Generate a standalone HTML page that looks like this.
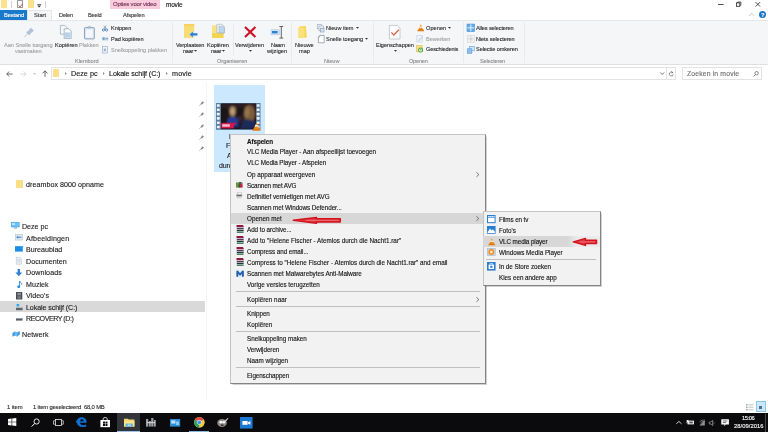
<!DOCTYPE html>
<html><head><meta charset="utf-8"><title>movie</title>
<style>
html,body{margin:0;padding:0;}
body{width:768px;height:432px;overflow:hidden;background:#fff;position:relative;font-family:'Liberation Sans', sans-serif;font-size:6.6px;color:#1a1a1a;}
.a{position:absolute;}
.t{position:absolute;white-space:nowrap;line-height:40px;transform:scale(.25);transform-origin:0 0;-webkit-text-stroke:0.45px;}
svg{position:absolute;overflow:visible;}
</style></head><body>
<div class="a" style="left:109.8px;top:0px;width:50px;height:9.3px;background:#f9cbdc;"></div>
<div class="t" style="left:113.00px;top:-0.70px;font-size:24.0px;color:#6e2f54;letter-spacing:-0.80px;">Opties voor video</div>
<div class="t" style="left:166.00px;top:0.30px;font-size:26.0px;color:#111;letter-spacing:-0.83px;">movie</div>
<div class="a" style="left:1px;top:0px;width:6.2px;height:8px;background:#f9e18e;border-radius:0.5px"></div>
<div class="a" style="left:11px;top:1px;width:0.6px;height:7px;background:#d0d0d0;"></div>
<div class="a" style="left:16.5px;top:0px;width:6px;height:8px;background:#fdfdfd;border:0.6px solid #9a9a9a;box-sizing:border-box;border-radius:0.5px"></div>
<svg style="left:17.5px;top:2.5px" width="5" height="5" viewBox="0 0 5 5"><path d="M0.5 2.5 L2 4 L4.5 0.8" stroke="#c0504d" stroke-width="0.9" fill="none"/></svg>
<div class="a" style="left:28px;top:0px;width:5.6px;height:8px;background:#f9e18e;border-radius:0.5px"></div>
<svg style="left:37px;top:3.5px" width="4.5" height="4" viewBox="0 0 4.5 4"><rect x="0.3" y="0" width="3.8" height="0.7" fill="#333"/><path d="M0.3 1.5 H4.1 L2.2 3.5 Z" fill="#333"/></svg>
<div class="a" style="left:45px;top:1px;width:0.6px;height:7px;background:#d0d0d0;"></div>
<svg style="left:718px;top:0px" width="50" height="10" viewBox="0 0 50 10"><path d="M0 4.5 H5.6" stroke="#222" stroke-width="0.8"/><rect x="18.4" y="2.9" width="3.4" height="3.4" fill="none" stroke="#222" stroke-width="0.8"/><path d="M19.6 2.9 V2 H22.9 V5.3 H21.8" fill="none" stroke="#222" stroke-width="0.7"/><path d="M37.6 2.1 L42.1 6.6 M42.1 2.1 L37.6 6.6" stroke="#222" stroke-width="0.8"/></svg>
<div class="a" style="left:0px;top:10px;width:27px;height:10px;background:#1979ca;"></div>
<div class="t" style="left:3.50px;top:10.30px;font-size:22.8px;color:#fff;letter-spacing:-0.50px;">Bestand</div>
<div class="a" style="left:27px;top:10px;width:25px;height:11px;background:#f5f6f7;border:0.6px solid #e6e7e8;border-bottom:none;box-sizing:border-box"></div>
<div class="t" style="left:33.50px;top:10.30px;font-size:22.8px;color:#333;letter-spacing:-0.01px;">Start</div>
<div class="t" style="left:59.00px;top:10.30px;font-size:22.8px;color:#333;letter-spacing:-0.70px;">Delen</div>
<div class="t" style="left:87.50px;top:10.30px;font-size:22.8px;color:#333;letter-spacing:-0.84px;">Beeld</div>
<div class="t" style="left:123.30px;top:10.20px;font-size:22.8px;color:#333;letter-spacing:-0.32px;">Afspelen</div>
<svg style="left:748px;top:12px" width="8" height="5" viewBox="0 0 8 5"><path d="M1 4 L3.7 1.3 L6.4 4" stroke="#bdbdbd" stroke-width="0.8" fill="none"/></svg>
<div class="a" style="left:759.3px;top:11.2px;width:7.2px;height:7.2px;background:#1a74c7;border-radius:50%"></div>
<div class="t" style="left:761.30px;top:9.90px;font-size:23.2px;color:#fff;letter-spacing:-0.99px;font-weight:700;">?</div>
<div class="a" style="left:0px;top:20px;width:768px;height:45px;background:#f5f6f7;border-top:0.6px solid #e6e7e8;border-bottom:0.7px solid #dfe0e1;box-sizing:border-box"></div>
<div class="a" style="left:52px;top:20px;width:0px;height:0px;background:#f5f6f7;"></div>
<div class="a" style="left:172px;top:22px;width:0.7px;height:41px;background:#e9eaeb;"></div>
<div class="a" style="left:291.3px;top:22px;width:0.7px;height:41px;background:#e9eaeb;"></div>
<div class="a" style="left:372.5px;top:22px;width:0.7px;height:41px;background:#e9eaeb;"></div>
<div class="a" style="left:463.3px;top:22px;width:0.7px;height:41px;background:#e9eaeb;"></div>
<div class="a" style="left:523.5px;top:22px;width:0.7px;height:41px;background:#e9eaeb;"></div>
<div class="a" style="left:232.8px;top:24px;width:0.6px;height:32px;background:#eaebec;"></div>
<div class="t" style="left:4.00px;top:39.80px;font-size:22.4px;color:#a3a3a3;letter-spacing:-0.08px;">Aan Snelle toegang</div>
<div class="t" style="left:15.00px;top:46.00px;font-size:22.4px;color:#a3a3a3;letter-spacing:-0.25px;">vastmaken</div>
<div class="t" style="left:55.00px;top:39.80px;font-size:22.4px;color:#2a2a2a;letter-spacing:0.05px;">Kopiëren</div>
<div class="t" style="left:79.00px;top:39.80px;font-size:22.4px;color:#a3a3a3;letter-spacing:-0.23px;">Plakken</div>
<div class="t" style="left:111.00px;top:23.20px;font-size:22.4px;color:#2a2a2a;letter-spacing:-0.19px;">Knippen</div>
<div class="t" style="left:111.00px;top:34.00px;font-size:22.4px;color:#2a2a2a;letter-spacing:-0.16px;">Pad kopiëren</div>
<div class="t" style="left:111.00px;top:44.50px;font-size:22.4px;color:#a3a3a3;letter-spacing:0.00px;">Snelkoppeling plakken</div>
<div class="t" style="left:74.50px;top:55.50px;font-size:22.4px;color:#8c8c8c;letter-spacing:-0.23px;">Klembord</div>
<div class="t" style="left:175.80px;top:39.70px;font-size:22.4px;color:#2a2a2a;letter-spacing:-0.49px;">Verplaatsen</div>
<div class="t" style="left:182.50px;top:46.00px;font-size:22.4px;color:#2a2a2a;letter-spacing:-1.20px;">naar</div>
<div class="t" style="left:207.00px;top:39.70px;font-size:22.4px;color:#2a2a2a;letter-spacing:-0.35px;">Kopiëren</div>
<div class="t" style="left:210.50px;top:46.00px;font-size:22.4px;color:#2a2a2a;letter-spacing:-1.20px;">naar</div>
<div class="t" style="left:235.00px;top:39.70px;font-size:22.4px;color:#2a2a2a;letter-spacing:-0.09px;">Verwijderen</div>
<div class="t" style="left:270.70px;top:39.60px;font-size:22.4px;color:#2a2a2a;letter-spacing:-1.42px;">Naam</div>
<div class="t" style="left:267.00px;top:46.00px;font-size:22.4px;color:#2a2a2a;letter-spacing:0.05px;">wijzigen</div>
<div class="t" style="left:216.70px;top:55.50px;font-size:22.4px;color:#8c8c8c;letter-spacing:-0.18px;">Organiseren</div>
<svg style="left:194.2px;top:49.8px" width="3" height="2" viewBox="0 0 3 2"><path d="M0 0 H3 L1.5 1.7 Z" fill="#333"/></svg>
<svg style="left:222.2px;top:49.8px" width="3" height="2" viewBox="0 0 3 2"><path d="M0 0 H3 L1.5 1.7 Z" fill="#333"/></svg>
<svg style="left:248.5px;top:49.8px" width="3" height="2" viewBox="0 0 3 2"><path d="M0 0 H3 L1.5 1.7 Z" fill="#333"/></svg>
<svg style="left:393.5px;top:49.8px" width="3" height="2" viewBox="0 0 3 2"><path d="M0 0 H3 L1.5 1.7 Z" fill="#333"/></svg>
<div class="t" style="left:295.30px;top:39.70px;font-size:22.4px;color:#2a2a2a;letter-spacing:0.03px;">Nieuwe</div>
<div class="t" style="left:299.00px;top:46.00px;font-size:22.4px;color:#2a2a2a;letter-spacing:0.15px;">map</div>
<div class="t" style="left:325.80px;top:23.00px;font-size:22.4px;color:#2a2a2a;letter-spacing:-0.07px;">Nieuw item</div>
<svg style="left:355.5px;top:26.8px" width="3" height="2" viewBox="0 0 3 2"><path d="M0 0 H3 L1.5 1.7 Z" fill="#333"/></svg>
<div class="t" style="left:325.80px;top:33.80px;font-size:22.4px;color:#2a2a2a;letter-spacing:-0.04px;">Snelle toegang</div>
<svg style="left:365px;top:37.599999999999994px" width="3" height="2" viewBox="0 0 3 2"><path d="M0 0 H3 L1.5 1.7 Z" fill="#333"/></svg>
<div class="t" style="left:324.00px;top:55.50px;font-size:22.4px;color:#8c8c8c;letter-spacing:-0.04px;">Nieuw</div>
<div class="t" style="left:375.80px;top:39.50px;font-size:22.4px;color:#2a2a2a;letter-spacing:-0.21px;">Eigenschappen</div>
<div class="t" style="left:425.80px;top:22.90px;font-size:22.4px;color:#2a2a2a;letter-spacing:0.20px;">Openen</div>
<svg style="left:447.8px;top:26.900000000000002px" width="3" height="2" viewBox="0 0 3 2"><path d="M0 0 H3 L1.5 1.7 Z" fill="#333"/></svg>
<div class="t" style="left:425.80px;top:34.00px;font-size:22.4px;color:#a3a3a3;letter-spacing:-0.34px;">Bewerken</div>
<div class="t" style="left:425.80px;top:44.30px;font-size:22.4px;color:#2a2a2a;letter-spacing:-0.57px;">Geschiedenis</div>
<div class="t" style="left:408.50px;top:55.50px;font-size:22.4px;color:#8c8c8c;letter-spacing:-0.94px;">Openen</div>
<div class="t" style="left:476.20px;top:22.90px;font-size:22.4px;color:#2a2a2a;letter-spacing:-0.50px;">Alles selecteren</div>
<div class="t" style="left:476.20px;top:34.00px;font-size:22.4px;color:#2a2a2a;letter-spacing:-0.38px;">Niets selecteren</div>
<div class="t" style="left:476.20px;top:44.30px;font-size:22.4px;color:#2a2a2a;letter-spacing:-0.35px;">Selectie omkeren</div>
<div class="t" style="left:480.40px;top:55.50px;font-size:22.4px;color:#8c8c8c;letter-spacing:-0.70px;">Selecteren</div>
<svg style="left:6px;top:70.5px" width="7" height="6" viewBox="0 0 7 6"><path d="M6.5 3 H0.8 M3.2 0.5 L0.7 3 L3.2 5.5" stroke="#444" stroke-width="0.8" fill="none"/></svg>
<svg style="left:19.5px;top:70.5px" width="7" height="6" viewBox="0 0 7 6"><path d="M0.3 3 H6 M3.6 0.5 L6.1 3 L3.6 5.5" stroke="#d0d0d0" stroke-width="0.8" fill="none"/></svg>
<svg style="left:33px;top:72.5px" width="3" height="2" viewBox="0 0 3 2"><path d="M0 0 H3 L1.5 1.7 Z" fill="#c4c4c4"/></svg>
<svg style="left:41.5px;top:70px" width="6" height="7" viewBox="0 0 6 7"><path d="M3 6.8 V0.9 M0.5 3.4 L3 0.8 L5.5 3.4" stroke="#444" stroke-width="0.8" fill="none"/></svg>
<div class="a" style="left:51px;top:67px;width:625px;height:13px;background:#fff;border:0.6px solid #e2e2e2;box-sizing:border-box"></div>
<div class="a" style="left:53px;top:69.3px;width:6.4px;height:7.7px;background:#f8df88;border-radius:0.5px"></div>
<svg style="left:64.5px;top:72px" width="2" height="3" viewBox="0 0 2 3"><path d="M0 0 L1.7 1.5 L0 3 Z" fill="#8a8a8a"/></svg>
<svg style="left:102.5px;top:72px" width="2" height="3" viewBox="0 0 2 3"><path d="M0 0 L1.7 1.5 L0 3 Z" fill="#8a8a8a"/></svg>
<svg style="left:165.5px;top:72px" width="2" height="3" viewBox="0 0 2 3"><path d="M0 0 L1.7 1.5 L0 3 Z" fill="#8a8a8a"/></svg>
<div class="t" style="left:71.00px;top:68.30px;font-size:28.8px;color:#111;letter-spacing:0.07px;">Deze pc</div>
<div class="t" style="left:109.00px;top:68.30px;font-size:28.8px;color:#111;letter-spacing:-0.50px;">Lokale schijf (C:)</div>
<div class="t" style="left:172.30px;top:68.30px;font-size:28.8px;color:#111;letter-spacing:0.65px;">movie</div>
<svg style="left:659.5px;top:72px" width="4.5" height="3.5" viewBox="0 0 4.5 3.5"><path d="M0.3 0.5 L2.2 2.5 L4.1 0.5" stroke="#555" stroke-width="0.8" fill="none"/></svg>
<div class="a" style="left:666px;top:67.5px;width:0.6px;height:12px;background:#e4e4e4;"></div>
<svg style="left:668.5px;top:71px" width="5" height="5.5" viewBox="0 0 5 5.5"><path d="M3.8 1.6 A2 2 0 1 0 4.3 3.2" stroke="#666" stroke-width="0.7" fill="none"/><path d="M2.6 0.2 L4.4 1.7 L2.6 2.4 Z" fill="#666"/></svg>
<div class="a" style="left:681.5px;top:67px;width:80.5px;height:13px;background:#fff;border:0.6px solid #e2e2e2;box-sizing:border-box"></div>
<div class="t" style="left:686.70px;top:68.50px;font-size:27.2px;color:#6d6d6d;letter-spacing:0.65px;">Zoeken in movie</div>
<svg style="left:753px;top:70.5px" width="6" height="6" viewBox="0 0 6 6"><circle cx="3.6" cy="2.2" r="1.7" stroke="#555" stroke-width="0.7" fill="none"/><path d="M2.4 3.5 L0.5 5.4" stroke="#555" stroke-width="0.8"/></svg>
<div class="a" style="left:16px;top:180px;width:6.5px;height:8px;background:#f8df88;border-radius:0.5px"></div>
<div class="t" style="left:26.00px;top:179.30px;font-size:28.4px;color:#1a1a1a;letter-spacing:0.22px;">dreambox 8000 opname</div>
<div class="a" style="left:0px;top:301px;width:205.3px;height:11.2px;background:#d9d9d9;"></div>
<div class="t" style="left:21.70px;top:221.00px;font-size:28.4px;color:#1a1a1a;letter-spacing:-0.02px;">Deze pc</div>
<div class="t" style="left:25.70px;top:232.70px;font-size:28.4px;color:#1a1a1a;letter-spacing:0.63px;">Afbeeldingen</div>
<div class="t" style="left:25.70px;top:244.30px;font-size:28.4px;color:#1a1a1a;letter-spacing:0.00px;">Bureaublad</div>
<div class="t" style="left:25.70px;top:256.00px;font-size:28.4px;color:#1a1a1a;letter-spacing:0.23px;">Documenten</div>
<div class="t" style="left:25.70px;top:267.30px;font-size:28.4px;color:#1a1a1a;letter-spacing:0.31px;">Downloads</div>
<div class="t" style="left:25.70px;top:278.80px;font-size:28.4px;color:#1a1a1a;letter-spacing:0.08px;">Muziek</div>
<div class="t" style="left:25.70px;top:290.30px;font-size:28.4px;color:#1a1a1a;letter-spacing:0.04px;">Video's</div>
<div class="t" style="left:25.70px;top:302.00px;font-size:28.4px;color:#1a1a1a;letter-spacing:-0.34px;">Lokale schijf (C:)</div>
<div class="t" style="left:25.70px;top:313.40px;font-size:28.4px;color:#1a1a1a;letter-spacing:-1.86px;">RECOVERY (D:)</div>
<div class="t" style="left:21.70px;top:329.00px;font-size:28.4px;color:#1a1a1a;letter-spacing:0.32px;">Netwerk</div>
<svg style="left:199px;top:100.7px" width="5" height="5" viewBox="0 0 5 5"><path d="M0.3 4.7 L2.2 2.8" stroke="#8a8d92" stroke-width="0.6"/><path d="M1.6 2.4 L2.9 3.7 L4.9 1.5 L3.6 0.3 Z" fill="#84888e"/></svg>
<svg style="left:199px;top:112.1px" width="5" height="5" viewBox="0 0 5 5"><path d="M0.3 4.7 L2.2 2.8" stroke="#8a8d92" stroke-width="0.6"/><path d="M1.6 2.4 L2.9 3.7 L4.9 1.5 L3.6 0.3 Z" fill="#84888e"/></svg>
<svg style="left:199px;top:123.5px" width="5" height="5" viewBox="0 0 5 5"><path d="M0.3 4.7 L2.2 2.8" stroke="#8a8d92" stroke-width="0.6"/><path d="M1.6 2.4 L2.9 3.7 L4.9 1.5 L3.6 0.3 Z" fill="#84888e"/></svg>
<svg style="left:199px;top:134.9px" width="5" height="5" viewBox="0 0 5 5"><path d="M0.3 4.7 L2.2 2.8" stroke="#8a8d92" stroke-width="0.6"/><path d="M1.6 2.4 L2.9 3.7 L4.9 1.5 L3.6 0.3 Z" fill="#84888e"/></svg>
<svg style="left:199px;top:146.3px" width="5" height="5" viewBox="0 0 5 5"><path d="M0.3 4.7 L2.2 2.8" stroke="#8a8d92" stroke-width="0.6"/><path d="M1.6 2.4 L2.9 3.7 L4.9 1.5 L3.6 0.3 Z" fill="#84888e"/></svg>
<div class="a" style="left:206.3px;top:82px;width:0.6px;height:318px;background:#f5f5f5;"></div>
<div class="a" style="left:214.4px;top:84.6px;width:50.3px;height:87.2px;background:#cce8ff;"></div>
<div class="t" style="left:228.91px;top:131.90px;font-size:28.0px;color:#1a1a1a;letter-spacing:0.00px;">Helene</div>
<div class="t" style="left:226.38px;top:141.30px;font-size:28.0px;color:#1a1a1a;letter-spacing:0.00px;">Fischer -</div>
<div class="t" style="left:227.35px;top:151.40px;font-size:28.0px;color:#1a1a1a;letter-spacing:0.00px;">Atemlos</div>
<div class="t" style="left:218.90px;top:161.00px;font-size:28.0px;color:#1a1a1a;letter-spacing:-0.52px;">durch die Na...</div>
<div class="t" style="left:7.00px;top:402.40px;font-size:23.6px;color:#2a2a2a;letter-spacing:-0.36px;">1 item</div>
<div class="t" style="left:33.00px;top:402.40px;font-size:23.6px;color:#2a2a2a;letter-spacing:-0.73px;">1 item geselecteerd&nbsp; 68,0 MB</div>
<svg style="left:746px;top:403.5px" width="8" height="7" viewBox="0 0 8 7"><g fill="#9aa0a6"><rect x="0" y="0.2" width="1.6" height="1.3"/><rect x="2.4" y="0.2" width="5" height="1.3" opacity="0.5"/><rect x="0" y="2.6" width="1.6" height="1.3"/><rect x="2.4" y="2.6" width="5" height="1.3" opacity="0.5"/><rect x="0" y="5" width="1.6" height="1.3"/><rect x="2.4" y="5" width="5" height="1.3" opacity="0.5"/></g></svg>
<div class="a" style="left:755.5px;top:401.3px;width:10px;height:10.7px;background:#cce8ff;border:0.6px solid #8cc4ea;box-sizing:border-box"></div>
<div class="a" style="left:759px;top:406px;width:3.2px;height:3px;background:#4d6f8f;"></div>
<div class="a" style="left:0px;top:413px;width:768px;height:19px;background:#0b0b0d;"></div>
<div class="a" style="left:117px;top:413px;width:23px;height:19px;background:#34353a;"></div>
<div class="a" style="left:117px;top:430.6px;width:23px;height:1.4px;background:#9ec3e6;"></div>
<div class="a" style="left:188.7px;top:430.6px;width:20px;height:1.4px;background:#8ab4dd;"></div>
<div class="t" style="left:742.00px;top:412.60px;font-size:23.2px;color:#fff;letter-spacing:-1.77px;">15:06</div>
<div class="t" style="left:733.50px;top:420.80px;font-size:23.2px;color:#fff;letter-spacing:0.19px;">28/09/2016</div>
<div class="a" style="left:230.4px;top:133.8px;width:255.7px;height:250px;background:#f2f2f2;border:0.6px solid #c4c4c4;border-right:1.2px solid #848484;border-bottom:1.3px solid #848484;box-sizing:border-box;box-shadow:0.6px 0.6px 1px rgba(0,0,0,0.18)"></div>
<div class="a" style="left:231.2px;top:213.0px;width:253.4px;height:10.8px;background:#d7d7d7;"></div>
<div class="t" style="left:247.20px;top:136.50px;font-size:25.2px;color:#111;letter-spacing:-0.30px;font-weight:700;">Afspelen</div>
<div class="t" style="left:247.20px;top:147.10px;font-size:25.2px;color:#111;letter-spacing:-0.05px;">VLC Media Player - Aan afspeellijst toevoegen</div>
<div class="t" style="left:247.20px;top:158.30px;font-size:25.2px;color:#111;letter-spacing:-0.21px;">VLC Media Player - Afspelen</div>
<div class="t" style="left:247.20px;top:169.50px;font-size:25.2px;color:#111;letter-spacing:0.12px;">Op apparaat weergeven</div>
<div class="t" style="left:247.20px;top:180.50px;font-size:25.2px;color:#111;letter-spacing:-0.57px;">Scannen met AVG</div>
<div class="t" style="left:247.20px;top:191.70px;font-size:25.2px;color:#111;letter-spacing:-0.13px;">Definitief vernietigen met AVG</div>
<div class="t" style="left:247.20px;top:202.90px;font-size:25.2px;color:#111;letter-spacing:-0.28px;">Scannen met Windows Defender...</div>
<div class="t" style="left:247.20px;top:213.90px;font-size:25.2px;color:#111;letter-spacing:0.06px;">Openen met</div>
<div class="t" style="left:247.20px;top:224.80px;font-size:25.2px;color:#111;letter-spacing:-0.22px;">Add to archive...</div>
<div class="t" style="left:247.20px;top:235.70px;font-size:25.2px;color:#111;letter-spacing:0.05px;">Add to "Helene Fischer - Atemlos durch die Nacht1.rar"</div>
<div class="t" style="left:247.20px;top:246.60px;font-size:25.2px;color:#111;letter-spacing:-0.29px;">Compress and email...</div>
<div class="t" style="left:247.20px;top:257.60px;font-size:25.2px;color:#111;letter-spacing:0.02px;">Compress to "Helene Fischer - Atemlos durch die Nacht1.rar" and email</div>
<div class="t" style="left:247.20px;top:268.60px;font-size:25.2px;color:#111;letter-spacing:-0.11px;">Scannen met Malwarebytes Anti-Malware</div>
<div class="t" style="left:247.20px;top:279.90px;font-size:25.2px;color:#111;letter-spacing:-0.00px;">Vorige versies terugzetten</div>
<div class="t" style="left:247.20px;top:294.70px;font-size:25.2px;color:#111;letter-spacing:0.07px;">Kopiëren naar</div>
<div class="t" style="left:247.20px;top:308.70px;font-size:25.2px;color:#111;letter-spacing:-0.18px;">Knippen</div>
<div class="t" style="left:247.20px;top:319.60px;font-size:25.2px;color:#111;letter-spacing:0.04px;">Kopiëren</div>
<div class="t" style="left:247.20px;top:334.40px;font-size:25.2px;color:#111;letter-spacing:-0.09px;">Snelkoppeling maken</div>
<div class="t" style="left:247.20px;top:345.30px;font-size:25.2px;color:#111;letter-spacing:-0.22px;">Verwijderen</div>
<div class="t" style="left:247.20px;top:356.20px;font-size:25.2px;color:#111;letter-spacing:0.05px;">Naam wijzigen</div>
<div class="t" style="left:247.20px;top:370.60px;font-size:25.2px;color:#111;letter-spacing:-0.41px;">Eigenschappen</div>
<div class="a" style="left:235.5px;top:291.0px;width:244.5px;height:0.9px;background:#bfbfbf;"></div>
<div class="a" style="left:235.5px;top:306.0px;width:244.5px;height:0.9px;background:#bfbfbf;"></div>
<div class="a" style="left:235.5px;top:331.1px;width:244.5px;height:0.9px;background:#bfbfbf;"></div>
<div class="a" style="left:235.5px;top:367.0px;width:244.5px;height:0.9px;background:#bfbfbf;"></div>
<svg style="left:476px;top:171.9px" width="3.5" height="5.2" viewBox="0 0 3.5 5.2"><path d="M0.4 0.3 L2.9 2.6 L0.4 4.9" stroke="#444" stroke-width="0.7" fill="none"/></svg>
<svg style="left:476px;top:216.3px" width="3.5" height="5.2" viewBox="0 0 3.5 5.2"><path d="M0.4 0.3 L2.9 2.6 L0.4 4.9" stroke="#444" stroke-width="0.7" fill="none"/></svg>
<svg style="left:476px;top:297.09999999999997px" width="3.5" height="5.2" viewBox="0 0 3.5 5.2"><path d="M0.4 0.3 L2.9 2.6 L0.4 4.9" stroke="#444" stroke-width="0.7" fill="none"/></svg>
<svg style="left:293px;top:217.29999999999998px" width="47.60000000000002" height="6.6" viewBox="0 0 47.60000000000002 6.6"><path d="M0.3 3.3 L23.5 0.4 L23.5 1.6999999999999997 L47.300000000000026 1.6999999999999997 L47.300000000000026 4.9 L23.5 4.9 L23.5 6.199999999999999 Z" fill="#e23a42" stroke="#d4121c" stroke-width="1.5" stroke-linejoin="round"/><path d="M12.925 3.3 H45.60000000000002" stroke="#f6a8a8" stroke-width="0.5"/></svg>
<div class="a" style="left:482.5px;top:211.4px;width:118.5px;height:74.4px;background:#f2f2f2;border:0.6px solid #c4c4c4;border-right:1.2px solid #848484;border-bottom:1.3px solid #848484;box-sizing:border-box;box-shadow:0.6px 0.6px 1px rgba(0,0,0,0.18)"></div>
<div class="a" style="left:483.3px;top:236.1px;width:116.3px;height:10.5px;background:linear-gradient(90deg,#d7d7d7 0,#d7d7d7 72%,#eaeaea 80%,#eaeaea 100%);"></div>
<div class="t" style="left:499.00px;top:214.70px;font-size:25.2px;color:#111;letter-spacing:-0.42px;">Films en tv</div>
<div class="t" style="left:499.00px;top:225.60px;font-size:25.2px;color:#111;letter-spacing:-0.10px;">Foto's</div>
<div class="t" style="left:499.00px;top:237.00px;font-size:25.2px;color:#111;letter-spacing:-0.39px;">VLC media player</div>
<div class="t" style="left:499.00px;top:247.80px;font-size:25.2px;color:#111;letter-spacing:-0.09px;">Windows Media Player</div>
<div class="t" style="left:499.00px;top:262.40px;font-size:25.2px;color:#111;letter-spacing:-0.19px;">In de Store zoeken</div>
<div class="t" style="left:499.00px;top:273.00px;font-size:25.2px;color:#111;letter-spacing:-0.07px;">Kies een andere app</div>
<div class="a" style="left:485.5px;top:259px;width:110px;height:0.9px;background:#bfbfbf;"></div>
<svg style="left:573.2px;top:237.7px" width="23.799999999999955" height="7.8" viewBox="0 0 23.799999999999955 7.8"><path d="M0.3 3.9 L12.4 0.4 L12.4 2.2 L23.499999999999954 2.2 L23.499999999999954 5.6 L12.4 5.6 L12.4 7.3999999999999995 Z" fill="#e23a42" stroke="#d4121c" stroke-width="1.5" stroke-linejoin="round"/><path d="M6.820000000000001 3.9 H21.799999999999955" stroke="#f6a8a8" stroke-width="0.5"/></svg>
<svg style="left:23.5px;top:27.8px" width="10" height="9.5" viewBox="0 0 10 9.5"><g fill="#b2c0d8" stroke="#b2c0d8" stroke-width="0.4"><path d="M0.3 9.2 L3.6 5.6" stroke-width="0.9"/><path d="M2.2 4.2 L5.2 7.2 L6.2 5.6 L8.8 3.6 L9.4 2.2 L7.4 0.3 L6 0.8 L4 3.4 Z"/></g></svg>
<svg style="left:60px;top:25px" width="12" height="14" viewBox="0 0 12 14"><path d="M0.4 0.4 H4.8 L6.8 2.4 V9.2 H0.4 Z" fill="#f4f6f9" stroke="#9aa7b8" stroke-width="0.7"/><path d="M4.2 3.8 H9 L11.2 6 V13.4 H4.2 Z" fill="#fbfcfd" stroke="#8f9db0" stroke-width="0.7"/><rect x="5" y="7.4" width="5.5" height="5.2" fill="#b7d3ec"/></svg>
<svg style="left:83.6px;top:25.5px" width="11" height="13.5" viewBox="0 0 11 13.5"><rect x="0.5" y="1.6" width="9.8" height="11.3" rx="0.6" fill="#dfe9f6" stroke="#8197b4" stroke-width="0.9"/><rect x="2" y="3.4" width="6.8" height="8.2" fill="#f3f7fc"/><rect x="3.4" y="0.2" width="4" height="2.4" rx="0.5" fill="#a9b9cf"/></svg>
<svg style="left:102.1px;top:25px" width="6" height="6.8" viewBox="0 0 7 7"><path d="M2.2 0.3 L4.2 4.4 M4.8 0.3 L2.8 4.4" stroke="#5b7897" stroke-width="0.7"/><circle cx="1.7" cy="5.3" r="1.3" fill="none" stroke="#2f72b8" stroke-width="0.9"/><circle cx="5.3" cy="5.3" r="1.3" fill="none" stroke="#2f72b8" stroke-width="0.9"/></svg>
<svg style="left:101.8px;top:37px" width="7" height="4" viewBox="0 0 7 4"><rect x="0" y="0.2" width="6.4" height="3.4" fill="#c9ddf1"/><path d="M0.6 1 H2.6 M0.6 2.2 H2.6" stroke="#2f72b8" stroke-width="0.8"/><path d="M3.4 1.8 H6" stroke="#5b7897" stroke-width="0.7"/></svg>
<svg style="left:102.3px;top:45.7px" width="6" height="7.5" viewBox="0 0 6 7.5"><rect x="0.4" y="0.4" width="5" height="6.6" fill="#eef3fa" stroke="#9db2cc" stroke-width="0.7"/><rect x="1.8" y="2.6" width="2.2" height="2.6" fill="#9db2cc"/></svg>
<svg style="left:184.4px;top:24.4px" width="14" height="14.5" viewBox="0 0 14 14.5"><path d="M0 0 H10.2 V13.9 H0 Z" fill="#f9dc74"/><path d="M0 0 H10.2 V2.4 H0 Z" fill="#f6d360"/><path d="M13.6 9 H9 V7 L5.4 10.4 L9 13.8 V11.8 H13.6 Z" fill="#2d7fd0" stroke="#d8ecfa" stroke-width="0.5"/></svg>
<svg style="left:212.2px;top:24.4px" width="13" height="14.5" viewBox="0 0 13 14.5"><path d="M0 1.2 H11.5 V13.9 H0 Z" fill="#f9e18a"/><path d="M0 9.2 H11.5 V13.9 H0 Z" fill="#f5d352"/><path d="M4.9 0.3 H9.8 L12.3 2.6 V8.9 H4.9 Z" fill="#f6f8fb" stroke="#97a6b9" stroke-width="0.6"/><path d="M7 2.2 H10.6 L12.3 3.8 V8.9 H7 Z" fill="#bfd8f0" stroke="#97a6b9" stroke-width="0.5"/></svg>
<svg style="left:244px;top:26px" width="12.5" height="12" viewBox="0 0 12.5 12"><path d="M1 1 L11.4 11 M11.4 1 L1 11" stroke="#cc1228" stroke-width="2.1" stroke-linecap="butt"/></svg>
<svg style="left:271.2px;top:25.8px" width="13.5" height="13" viewBox="0 0 13.5 13"><rect x="0" y="3.8" width="8.6" height="5" fill="#d6e6f7" stroke="#9fc0e6" stroke-width="0.5"/><rect x="1" y="5" width="5.6" height="2.4" fill="#2d7fd0"/><path d="M10.3 0.6 V12 M8.4 0.5 H12.2 M8.4 12.1 H12.2" stroke="#4e5359" stroke-width="0.9" fill="none"/></svg>
<svg style="left:298.4px;top:26.2px" width="9" height="12.3" viewBox="0 0 9 12.3"><path d="M1.4 0.5 L7.8 0 L8.8 11.4 L1.4 12 Z" fill="#f6d44c"/><path d="M0.2 1.6 H6.6 V12 H0.2 Z" fill="#f9e27c"/></svg>
<svg style="left:317px;top:24px" width="7.5" height="8.5" viewBox="0 0 7.5 8.5"><rect x="0.4" y="0.4" width="4" height="4.4" fill="#f2f5f9" stroke="#97a6b9" stroke-width="0.6"/><rect x="2" y="2" width="4.4" height="4.8" fill="#f2f5f9" stroke="#97a6b9" stroke-width="0.6"/><rect x="3.4" y="4.2" width="3.6" height="3.8" fill="#d5e4f3" stroke="#8197b4" stroke-width="0.6"/></svg>
<svg style="left:317.5px;top:34.7px" width="7" height="8.3" viewBox="0 0 7 8.3"><path d="M1.8 0.4 H6.2 V7.8 H0.4 V2 Z" fill="#fdfdfe" stroke="#7f8b99" stroke-width="0.7"/><path d="M0.4 2 H1.8 V0.4" fill="none" stroke="#7f8b99" stroke-width="0.5"/></svg>
<svg style="left:389px;top:24.5px" width="11.5" height="14.5" viewBox="0 0 11.5 14.5"><path d="M0.4 0.4 H8.4 L11 3 V14 H0.4 Z" fill="#fdfdfd" stroke="#b5b9bf" stroke-width="0.7"/><path d="M2.4 7.4 L4.8 10 L9.8 4.8" stroke="#d3684a" stroke-width="1.3" fill="none"/></svg>
<svg style="left:416.5px;top:24.2px" width="7.5" height="7.5" viewBox="0 0 7.5 7.5"><path d="M3.75 0.2 L6.2 6 H1.3 Z" fill="#f08a1c"/><path d="M2.7 2.6 H4.8 L5.3 3.8 H2.2 Z" fill="#fdfdfd"/><path d="M0.3 7.3 L1 5.6 H6.5 L7.2 7.3 Z" fill="#e2780f"/></svg>
<svg style="left:416.3px;top:35.2px" width="7.5" height="7.5" viewBox="0 0 7.5 7.5"><rect x="0.8" y="0.4" width="5.4" height="6.6" fill="#eef3fa" stroke="#c3d0e0" stroke-width="0.6"/><path d="M2 5.6 L6.6 1 L7.2 1.8 L2.8 6.2 Z" fill="#c3d0e0"/></svg>
<svg style="left:416.3px;top:45.4px" width="7.5" height="7.8" viewBox="0 0 7.5 7.8"><rect x="0.4" y="0.4" width="5.8" height="6.4" fill="#f8de82" stroke="#d8b94f" stroke-width="0.5"/><circle cx="4.6" cy="5" r="2.5" fill="#55a83a"/><circle cx="4.6" cy="5" r="1.5" fill="#eaf5e4"/><path d="M4.6 4 V5 H5.5" stroke="#2f6b1e" stroke-width="0.5" fill="none"/></svg>
<svg style="left:467px;top:24px" width="7.8" height="7.8" viewBox="0 0 7.8 7.8"><g fill="#62aeea"><rect x="0" y="0" width="3.4" height="3.4"/><rect x="4.3" y="0" width="3.4" height="3.4"/><rect x="0" y="4.3" width="3.4" height="3.4"/><rect x="4.3" y="4.3" width="3.4" height="3.4"/></g><rect x="0" y="0" width="7.7" height="7.7" fill="none" stroke="#3b8ad6" stroke-width="0.5"/></svg>
<svg style="left:466.9px;top:35.1px" width="7.8" height="7.8" viewBox="0 0 7.8 7.8"><g fill="#fbfbfc" stroke="#c7ccd3" stroke-width="0.5"><rect x="0.3" y="0.3" width="3.3" height="3.3"/><rect x="4.1" y="0.3" width="3.3" height="3.3"/><rect x="0.3" y="4.1" width="3.3" height="3.3"/><rect x="4.1" y="4.1" width="3.3" height="3.3"/></g><path d="M1 1 L6.8 6.8 M6.8 1 L1 6.8" stroke="#f0b5b5" stroke-width="0.4"/></svg>
<svg style="left:466.9px;top:45.5px" width="7.8" height="7.8" viewBox="0 0 7.8 7.8"><g stroke="#4a8fd2" stroke-width="0.5"><rect x="2.6" y="0.3" width="4.6" height="4.6" fill="#d5e6f7"/><rect x="0.3" y="2.8" width="4.6" height="4.6" fill="#8fc0ec"/></g></svg>
<svg style="left:11.3px;top:222.3px" width="8.5" height="6.6" viewBox="0 0 8.5 6.6"><rect x="0.2" y="0.2" width="8" height="4.8" fill="#6ec1f2" stroke="#2f97df" stroke-width="0.5"/><rect x="1" y="1" width="3" height="2" fill="#b7e2fb"/><rect x="2.6" y="5.6" width="3.4" height="0.8" fill="#5a8fb8"/></svg>
<svg style="left:15.1px;top:234.0px" width="7.8" height="6.4" viewBox="0 0 7.8 6.4"><rect x="0.3" y="0.3" width="7.2" height="5.8" fill="#dfe8f1" stroke="#a9bccf" stroke-width="0.5"/><path d="M1.2 3.2 L3.2 1.8 V2.8 H6.4 V3.8 H3.2 V4.8 Z" fill="#3d86c6"/></svg>
<svg style="left:15.1px;top:246.3px" width="7.8" height="5.8" viewBox="0 0 7.8 5.8"><rect x="0" y="0" width="7.8" height="5.6" fill="#1b8ee6"/><rect x="0" y="0" width="7.8" height="1" fill="#3da5f2"/></svg>
<svg style="left:16.1px;top:256.8px" width="5.8" height="7.5" viewBox="0 0 5.8 7.5"><path d="M0.3 0.3 H4 L5.4 1.7 V7.2 H0.3 Z" fill="#f1f4f8" stroke="#a9b7c7" stroke-width="0.5"/><path d="M1.3 2.6 H4.4 M1.3 3.8 H4.4 M1.3 5 H4.4" stroke="#a3c2e2" stroke-width="0.5"/></svg>
<svg style="left:15.4px;top:269px" width="7.6" height="7.6" viewBox="0 0 7.6 7.6"><path d="M2.6 0 H5 V3.4 H7.2 L3.8 7.2 L0.4 3.4 H2.6 Z" fill="#2d80d2"/></svg>
<svg style="left:16.6px;top:280.6px" width="5.6" height="7.6" viewBox="0 0 5.6 7.6"><path d="M2.6 0.2 V5.2" stroke="#2486dd" stroke-width="0.9"/><path d="M2.6 0.2 C3.4 1.6 5 1.8 4.8 3.6" stroke="#2486dd" stroke-width="0.9" fill="none"/><ellipse cx="1.7" cy="5.8" rx="1.5" ry="1.2" fill="#2486dd"/></svg>
<svg style="left:16.2px;top:291.6px" width="6.4" height="7.6" viewBox="0 0 6.4 7.6"><rect x="0" y="0" width="6.3" height="7.5" fill="#4a4d52"/><rect x="1.4" y="0.8" width="3.5" height="2.6" fill="#8a9097"/><rect x="1.4" y="4.2" width="3.5" height="2.6" fill="#767c84"/></svg>
<svg style="left:15.9px;top:303.6px" width="6.8" height="6.4" viewBox="0 0 6.8 6.4"><rect x="0.6" y="0" width="2.6" height="2.4" fill="#2ea3ee"/><rect x="0" y="3.6" width="6.6" height="2.6" fill="#5a6068"/><rect x="0" y="3.2" width="6.6" height="0.9" fill="#b8bec6"/></svg>
<svg style="left:16px;top:318.4px" width="6.6" height="3" viewBox="0 0 6.6 3"><rect x="0" y="0" width="6.5" height="2.6" fill="#5a6068"/><rect x="0" y="0" width="6.5" height="0.8" fill="#a8aeb6"/></svg>
<svg style="left:11.8px;top:329.8px" width="8.2" height="7.4" viewBox="0 0 8.2 7.4"><path d="M0.4 3 L3 1.6 L5.2 2.4 L7.8 1 V4.4 L5.2 6.4 L3 5.4 L0.4 6.8 Z" fill="#3f9be3"/><path d="M3 1.6 L5.2 2.4 V6.4 L3 5.4 Z" fill="#76bdf0"/></svg>
<svg style="left:235.8px;top:182px" width="7" height="5.8" viewBox="0 0 7 5.8"><rect x="0" y="0.4" width="3.6" height="5.2" fill="#6f8f3c"/><rect x="3" y="0" width="2.6" height="3" fill="#1f6a62"/><rect x="2.6" y="2.4" width="1.6" height="3.2" fill="#2d5a34"/><rect x="4" y="2.2" width="2.6" height="3.4" fill="#c22045"/><rect x="5.4" y="0.4" width="1.2" height="2" fill="#d8466a"/></svg>
<svg style="left:236px;top:192.4px" width="6.4" height="7" viewBox="0 0 6.4 7"><rect x="1.2" y="0.3" width="4" height="2.6" fill="#f6f6f6" stroke="#a8a8a8" stroke-width="0.4"/><rect x="0.2" y="2.4" width="6" height="2" rx="0.4" fill="#8f8f8f"/><rect x="1" y="3" width="4.4" height="0.6" fill="#555"/><path d="M1.4 4.6 V6.6 M2.6 4.6 V6.2 M3.8 4.6 V6.6 M5 4.6 V6.2" stroke="#b0b0b0" stroke-width="0.6"/></svg>
<svg style="left:235.5px;top:225.1px" width="7.8" height="8" viewBox="0 0 7.8 8"><path d="M0.2 0.6 L1.4 0 H6.8 L7.6 1 V2.6 H0.8 Z" fill="#8a1c42"/><rect x="1" y="2.5" width="6.6" height="0.8" fill="#e6dfe4"/><rect x="0.8" y="3.2" width="6.8" height="1.4" fill="#1e1436"/><rect x="1" y="4.5" width="6.6" height="0.6" fill="#e2e4e6"/><rect x="0.8" y="5" width="6.8" height="1.1" fill="#1d3a30"/><rect x="1" y="6.1" width="6.6" height="0.6" fill="#dfe6e2"/><rect x="0.8" y="6.6" width="6.8" height="1.2" fill="#2b6048"/></svg>
<svg style="left:235.5px;top:236.1px" width="7.8" height="8" viewBox="0 0 7.8 8"><path d="M0.2 0.6 L1.4 0 H6.8 L7.6 1 V2.6 H0.8 Z" fill="#8a1c42"/><rect x="1" y="2.5" width="6.6" height="0.8" fill="#e6dfe4"/><rect x="0.8" y="3.2" width="6.8" height="1.4" fill="#1e1436"/><rect x="1" y="4.5" width="6.6" height="0.6" fill="#e2e4e6"/><rect x="0.8" y="5" width="6.8" height="1.1" fill="#1d3a30"/><rect x="1" y="6.1" width="6.6" height="0.6" fill="#dfe6e2"/><rect x="0.8" y="6.6" width="6.8" height="1.2" fill="#2b6048"/></svg>
<svg style="left:235.5px;top:247.0px" width="7.8" height="8" viewBox="0 0 7.8 8"><path d="M0.2 0.6 L1.4 0 H6.8 L7.6 1 V2.6 H0.8 Z" fill="#8a1c42"/><rect x="1" y="2.5" width="6.6" height="0.8" fill="#e6dfe4"/><rect x="0.8" y="3.2" width="6.8" height="1.4" fill="#1e1436"/><rect x="1" y="4.5" width="6.6" height="0.6" fill="#e2e4e6"/><rect x="0.8" y="5" width="6.8" height="1.1" fill="#1d3a30"/><rect x="1" y="6.1" width="6.6" height="0.6" fill="#dfe6e2"/><rect x="0.8" y="6.6" width="6.8" height="1.2" fill="#2b6048"/></svg>
<svg style="left:235.5px;top:258.0px" width="7.8" height="8" viewBox="0 0 7.8 8"><path d="M0.2 0.6 L1.4 0 H6.8 L7.6 1 V2.6 H0.8 Z" fill="#8a1c42"/><rect x="1" y="2.5" width="6.6" height="0.8" fill="#e6dfe4"/><rect x="0.8" y="3.2" width="6.8" height="1.4" fill="#1e1436"/><rect x="1" y="4.5" width="6.6" height="0.6" fill="#e2e4e6"/><rect x="0.8" y="5" width="6.8" height="1.1" fill="#1d3a30"/><rect x="1" y="6.1" width="6.6" height="0.6" fill="#dfe6e2"/><rect x="0.8" y="6.6" width="6.8" height="1.2" fill="#2b6048"/></svg>
<svg style="left:235.6px;top:269.6px" width="8.4" height="7" viewBox="0 0 8.4 7"><circle cx="4.2" cy="3.6" r="4" fill="#dcebf8" opacity="0.8"/><path d="M1.3 6 V1.4 L4.1 4.6 L6.9 1.4 V6" stroke="#2261ab" stroke-width="1.9" fill="none" stroke-linejoin="round" stroke-linecap="round"/></svg>
<svg style="left:487.4px;top:215.4px" width="8.6" height="8.2" viewBox="0 0 8.6 8.2"><rect x="0" y="0" width="8.6" height="8.2" fill="#2b7fd3"/><path d="M1 3 H7.6 V7.2 H1 Z" fill="#fff"/><path d="M1 1 H7.6 V2.4 H1 Z" fill="#fff"/><path d="M2.2 1 V2.4 M4.2 1 V2.4 M6.2 1 V2.4" stroke="#2b7fd3" stroke-width="0.6"/></svg>
<svg style="left:487.4px;top:226px" width="8.6" height="7.8" viewBox="0 0 8.6 7.8"><rect x="0" y="0" width="8.6" height="7.8" fill="#2b7fd3"/><path d="M0.8 6 L3 2.6 L4.6 4.6 L6 3.2 L7.8 6 V6.8 H0.8 Z" fill="#fff"/><rect x="0.8" y="5.4" width="7" height="1.6" fill="#fff"/></svg>
<svg style="left:488px;top:238.2px" width="7.5" height="7.5" viewBox="0 0 7.5 7.5"><path d="M3.75 0.2 L6.2 6 H1.3 Z" fill="#f08a1c"/><path d="M2.7 2.6 H4.8 L5.3 3.8 H2.2 Z" fill="#fdfdfd"/><path d="M0.3 7.3 L1 5.6 H6.5 L7.2 7.3 Z" fill="#e2780f"/></svg>
<svg style="left:487.4px;top:248.3px" width="8.6" height="7.8" viewBox="0 0 8.6 7.8"><rect x="0.2" y="0.2" width="8.2" height="7.4" fill="#c9d6e4" stroke="#8fa6bf" stroke-width="0.4"/><circle cx="4.3" cy="3.9" r="2.9" fill="#f08f1e"/><circle cx="4.3" cy="3.9" r="1.5" fill="#fbd9a5"/><path d="M3.8 3 L5.3 3.9 L3.8 4.8 Z" fill="#fff"/></svg>
<svg style="left:487.4px;top:262px" width="8.6" height="8.6" viewBox="0 0 8.6 8.6"><rect x="0" y="0" width="8.6" height="8.6" fill="#2b7fd3"/><rect x="1.6" y="2.6" width="5.4" height="4.4" fill="#fff"/><path d="M3 2.6 V1.4 H5.6 V2.6" stroke="#fff" stroke-width="0.6" fill="none"/><rect x="3.2" y="3.8" width="2.2" height="2" fill="#2b7fd3"/></svg>
<svg style="left:216.3px;top:102.9px" width="44.5" height="26.8" viewBox="0 0 44.5 26.8"><defs><filter id="bl" x="-10%" y="-10%" width="120%" height="120%"><feGaussianBlur stdDeviation="0.9"/></filter><clipPath id="cp"><rect x="5" y="0.6" width="35" height="25.6"/></clipPath></defs><rect x="0" y="0" width="44.5" height="26.8" fill="#5d7d9d"/><rect x="5" y="0.6" width="35" height="25.6" fill="#1b1518"/><g clip-path="url(#cp)"><g filter="url(#bl)"><rect x="5" y="0" width="36" height="5" fill="#2a1d22"/><ellipse cx="16.6" cy="8.5" rx="3.6" ry="5.2" fill="#a3875a"/><ellipse cx="16.4" cy="8.2" rx="1.8" ry="2.6" fill="#c79f80"/><path d="M10.5 24 L11.5 15 Q16.5 12 21.5 15 L23 24 Z" fill="#263a94"/><ellipse cx="33.5" cy="11" rx="6" ry="9" fill="#7a5c3e"/><ellipse cx="31" cy="9" rx="2.6" ry="5" fill="#96744c"/><path d="M24 26 L27 17 Q33 15 40 19 V26 Z" fill="#1d2a5c"/><rect x="22" y="13" width="4" height="6" fill="#3a2326"/></g><rect x="5.3" y="19.8" width="12.6" height="5.6" fill="#d3174a"/><rect x="6.2" y="21.2" width="7.6" height="2.6" fill="#f6b8c8"/><path d="M17.9 19.8 L20.5 19.8 L17.9 23 Z" fill="#d3174a"/></g><rect x="0.9" y="1.20" width="2.8" height="2.6" rx="0.4" fill="#eef3f8"/><rect x="40.8" y="1.20" width="2.8" height="2.6" rx="0.4" fill="#eef3f8"/><rect x="0.9" y="5.50" width="2.8" height="2.6" rx="0.4" fill="#eef3f8"/><rect x="40.8" y="5.50" width="2.8" height="2.6" rx="0.4" fill="#eef3f8"/><rect x="0.9" y="9.80" width="2.8" height="2.6" rx="0.4" fill="#eef3f8"/><rect x="40.8" y="9.80" width="2.8" height="2.6" rx="0.4" fill="#eef3f8"/><rect x="0.9" y="14.10" width="2.8" height="2.6" rx="0.4" fill="#eef3f8"/><rect x="40.8" y="14.10" width="2.8" height="2.6" rx="0.4" fill="#eef3f8"/><rect x="0.9" y="18.40" width="2.8" height="2.6" rx="0.4" fill="#eef3f8"/><rect x="40.8" y="18.40" width="2.8" height="2.6" rx="0.4" fill="#eef3f8"/><rect x="0.9" y="22.70" width="2.8" height="2.6" rx="0.4" fill="#eef3f8"/><rect x="40.8" y="22.70" width="2.8" height="2.6" rx="0.4" fill="#eef3f8"/></svg>
<svg style="left:252.3px;top:122px" width="9.0" height="9.0" viewBox="0 0 7.5 7.5"><path d="M3.75 0.2 L6.2 6 H1.3 Z" fill="#f08a1c"/><path d="M2.7 2.6 H4.8 L5.3 3.8 H2.2 Z" fill="#fdfdfd"/><path d="M0.3 7.3 L1 5.6 H6.5 L7.2 7.3 Z" fill="#e2780f"/></svg>
<svg style="left:7.5px;top:418.3px" width="8.4" height="8" viewBox="0 0 8.4 8"><g fill="#fff"><path d="M0 1.1 L3.6 0.6 V3.8 H0 Z"/><path d="M4.2 0.5 L8.3 0 V3.8 H4.2 Z"/><path d="M0 4.3 H3.6 V7.5 L0 7 Z"/><path d="M4.2 4.3 H8.3 V8 L4.2 7.5 Z"/></g></svg>
<svg style="left:30.5px;top:417.8px" width="9.5" height="9.5" viewBox="0 0 9.5 9.5"><circle cx="5.6" cy="3.5" r="2.6" fill="none" stroke="#fff" stroke-width="0.9"/><path d="M3.8 5.4 L0.6 8.6" stroke="#fff" stroke-width="1"/></svg>
<svg style="left:52.5px;top:419px" width="11" height="7" viewBox="0 0 11 7"><rect x="2.4" y="0.5" width="6" height="6" fill="none" stroke="#e8e8e8" stroke-width="0.8"/><path d="M2.4 1.8 H0.5 V5.2 H2.4 M8.4 1.8 H10.3 V5.2 H8.4" fill="none" stroke="#e8e8e8" stroke-width="0.7"/></svg>
<svg style="left:76.3px;top:417.4px" width="11.2" height="10.2" viewBox="0 0 11.2 10.2"><path d="M0.6 5.6 C0.4 2.4 2.8 0.2 5.8 0.2 C9 0.2 10.8 2.6 10.6 5.8 H4 C4.2 7.4 5.6 8.2 7.2 8.2 C8.4 8.2 9.4 7.9 10.2 7.4 V9.4 C9.2 9.9 8 10.1 6.6 10.1 C3.2 10.1 1.2 8.4 0.9 5.6 Z M4 4.2 H7.8 C7.8 3 7 2.2 5.8 2.2 C4.8 2.2 4.1 3 4 4.2 Z" fill="#1070d4" fill-rule="evenodd"/><path d="M0.6 5.6 C0.9 3.6 2.6 2.6 4.6 2.6" stroke="#1070d4" stroke-width="1.4" fill="none"/></svg>
<svg style="left:99.7px;top:417px" width="10.5" height="10.5" viewBox="0 0 10.5 10.5"><path d="M0.4 3 H10 V10.2 H0.4 Z" fill="#fff"/><path d="M3.2 3 V1.8 Q3.2 0.5 5.2 0.5 Q7.2 0.5 7.2 1.8 V3" stroke="#fff" stroke-width="0.8" fill="none"/><g fill="#0b0b0d"><rect x="3" y="4.6" width="2" height="2"/><rect x="5.5" y="4.6" width="2" height="2"/><rect x="3" y="7" width="2" height="2"/><rect x="5.5" y="7" width="2" height="2"/></g></svg>
<svg style="left:123.5px;top:418px" width="10.6" height="8.8" viewBox="0 0 10.6 8.8"><path d="M0 0.8 H4 L4.8 1.6 H10.4 V8.6 H0 Z" fill="#f7d66a"/><path d="M0 3 H10.4 V8.6 H0 Z" fill="#fbe38b"/><path d="M1.6 5.6 H8.8 V8.6 H1.6 Z" fill="#5ab3d9"/><rect x="3.6" y="6.6" width="3.2" height="1" fill="#e9f4fa"/></svg>
<svg style="left:146.4px;top:418.3px" width="10" height="8.8" viewBox="0 0 10 8.8"><g fill="#9b9ea3"><rect x="0" y="1" width="2.2" height="7.6"/><rect x="2.8" y="3" width="2" height="5.6"/><rect x="5.2" y="0" width="2.2" height="8.6"/><rect x="7.8" y="2" width="2" height="6.6"/></g><rect x="1" y="4" width="8" height="1.2" fill="#c9ccd0"/></svg>
<svg style="left:170.3px;top:418.7px" width="10.2" height="7.6" viewBox="0 0 10.2 7.6"><rect x="0" y="0" width="10.2" height="7.6" fill="#2a8fd8"/><rect x="1.2" y="1.4" width="4.2" height="3.2" fill="#bfe0f6"/><rect x="6" y="2.4" width="3" height="3.6" fill="#8cc8f0"/></svg>
<svg style="left:194.2px;top:416.7px" width="10.6" height="10.6" viewBox="0 0 10.6 10.6"><circle cx="5.3" cy="5.3" r="5.2" fill="#e8e8e8"/><path d="M5.3 5.3 L0.8 2.7 A5.2 5.2 0 0 1 9.8 2.7 Z" fill="#dd4b3e"/><path d="M5.3 5.3 L9.8 2.7 A5.2 5.2 0 0 1 5.3 10.5 Z" fill="#f7c72e"/><path d="M5.3 5.3 L5.3 10.5 A5.2 5.2 0 0 1 0.8 2.7 Z" fill="#2fa24f"/><circle cx="5.3" cy="5.3" r="2.4" fill="#fff"/><circle cx="5.3" cy="5.3" r="1.9" fill="#4a8bf0"/></svg>
<svg style="left:217px;top:417.3px" width="12" height="10.6" viewBox="0 0 12 10.6"><ellipse cx="5" cy="6" rx="4.8" ry="4" fill="#8d8a84"/><ellipse cx="3.8" cy="5.2" rx="1.5" ry="1.4" fill="#f4f4f4"/><ellipse cx="6.8" cy="5.2" rx="1.5" ry="1.4" fill="#f4f4f4"/><path d="M7 4 L11.4 0.4 L11 2 L8.6 5" fill="#c9c4b8"/><ellipse cx="5.2" cy="8.2" rx="1.4" ry="0.9" fill="#3a3835"/></svg>
<svg style="left:239.5px;top:416.7px" width="12.6" height="11.6" viewBox="0 0 12.6 11.6"><rect x="0" y="0" width="12.6" height="11.6" fill="#1b79d2"/><path d="M2.4 4 H7.6 V7.8 H2.4 Z" fill="#fff"/><path d="M7.8 5.4 L10.4 4 V7.8 L7.8 6.4 Z" fill="#fff"/></svg>
<svg style="left:676px;top:421px" width="6" height="3" viewBox="0 0 6 3"><path d="M0.3 2.8 L2.9 0.4 L5.5 2.8" stroke="#fff" stroke-width="0.8" fill="none"/></svg>
<svg style="left:686px;top:420px" width="8.5" height="5" viewBox="0 0 8.5 5"><rect x="1.6" y="0.6" width="6.4" height="3.8" fill="#e8e8e8"/><rect x="0.6" y="1.8" width="1" height="1.6" fill="#e8e8e8"/><circle cx="1.6" cy="1" r="1.1" fill="#fff"/><rect x="3.4" y="1.6" width="3.4" height="1.8" fill="#555"/></svg>
<svg style="left:699px;top:420px" width="6.2" height="5.8" viewBox="0 0 6.2 5.8"><path d="M0.3 5.6 L5.8 0.2 V5.6 Z" fill="#8f8f8f"/><path d="M1.6 3 A4 4 0 0 1 5.6 1.4 M0.6 1.8 A6 6 0 0 1 5.8 0" stroke="#cfcfcf" stroke-width="0.5" fill="none"/></svg>
<svg style="left:709px;top:419.8px" width="6" height="6" viewBox="0 0 6 6"><path d="M0.3 2 H1.8 L3.6 0.4 V5.6 L1.8 4 H0.3 Z" fill="none" stroke="#bdbdbd" stroke-width="0.6"/><path d="M4.6 1.6 Q5.6 3 4.6 4.4" stroke="#8d8d8d" stroke-width="0.5" fill="none"/></svg>
<svg style="left:721px;top:418.6px" width="8.2" height="7.6" viewBox="0 0 8.2 7.6"><path d="M0.3 0.3 H7.9 V5.6 H4.6 L3.4 7.2 V5.6 H0.3 Z" fill="#fff"/><path d="M1.8 2 H6.4 M1.8 3.6 H5" stroke="#0b0b0d" stroke-width="0.6"/></svg>
<div class="a" style="left:765.3px;top:413.5px;width:0.6px;height:18.5px;background:#4a4a4a;"></div>
</body></html>
